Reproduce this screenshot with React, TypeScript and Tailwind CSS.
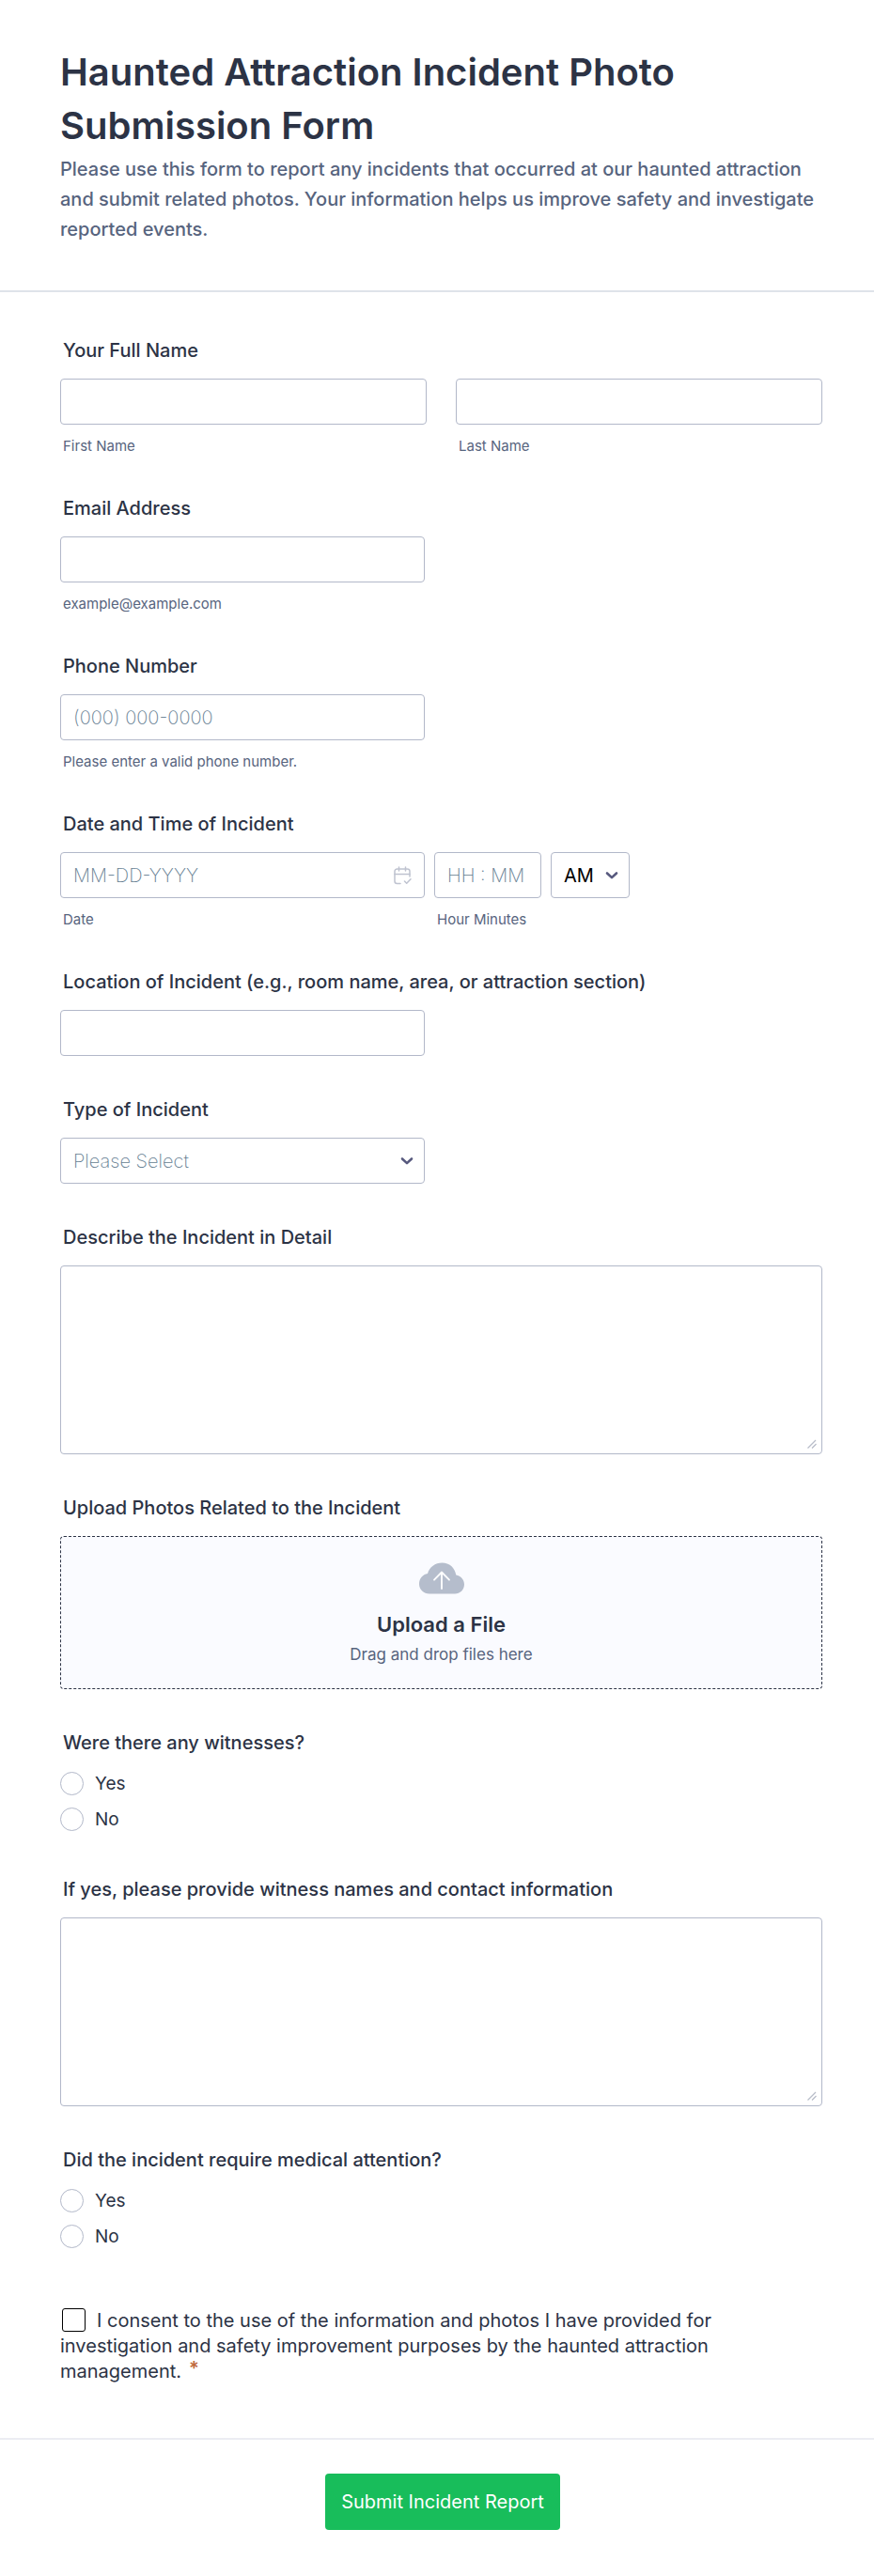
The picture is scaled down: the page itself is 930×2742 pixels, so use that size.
import { useState, type ReactNode } from 'react';

const inputBase =
  'h-[49px] rounded-sm border border-[#b2b8c9] bg-white px-[13px] text-xl font-extralight text-black placeholder:text-[#647d91] outline-none focus:border-blue-500';

const labelClass = 'mb-[18px] block px-[3px] text-xl leading-6 font-medium text-[#2c3345]';

interface FieldProps {
  id: string;
  label: string;
  children: ReactNode;
}

const Field = ({ id, label, children }: FieldProps) => (
  <div>
    <label htmlFor={id} className={labelClass}>
      {label}
    </label>
    {children}
  </div>
);

const SubLabel = ({ htmlFor, children }: { htmlFor: string; children: ReactNode }) => (
  <label htmlFor={htmlFor} className="mt-[14px] block px-[3px] text-[15px] leading-[18px] text-[#57647e]">
    {children}
  </label>
);

const TextArea = ({ id }: { id: string }) => (
  <div className="relative">
    <textarea
      id={id}
      className="block h-[201px] w-full resize-none rounded-sm border border-[#b2b8c9] bg-white p-3 text-xl font-light outline-none focus:border-blue-500"
    />
    <svg
      viewBox="0 0 10 10"
      className="pointer-events-none absolute right-[6px] bottom-[6px] h-[10px] w-[10px]"
      fill="none"
      stroke="#b8bdc9"
      strokeWidth="1.3"
    >
      <path d="M.5 9.500l8.500-8.500M5 9.500L9.500 5" />
    </svg>
  </div>
);

const ChevronIcon = ({ className }: { className: string }) => (
  <svg
    viewBox="0 0 14 9"
    className={`pointer-events-none absolute top-1/2 h-[9px] w-[14px] -translate-y-1/2 ${className}`}
    fill="none"
    stroke="#57597e"
    strokeWidth="2.6"
    strokeLinecap="round"
    strokeLinejoin="round"
  >
    <path d="M2 2l5 4.6L12 2" />
  </svg>
);

const CalendarIcon = () => (
  <svg
    viewBox="0 0 20 20"
    className="h-5 w-5"
    fill="none"
    stroke="#bfc3d0"
    strokeWidth="1.5"
    strokeLinecap="round"
    strokeLinejoin="round"
  >
    <path d="M8 18.500H4.500a2.500 2.500 0 0 1-2.500-2.500V5.500A2.500 2.500 0 0 1 4.500 3h11A2.500 2.500 0 0 1 18 5.500V11" />
    <path d="M2 8.500h16M6.500 1v4M13.500 1v4" />
    <path d="M12.500 16l2.200 2.200 4.300-4.400" />
  </svg>
);

const CloudIcon = () => (
  <svg viewBox="0 0 48 34" className="h-[34px] w-12">
    <path
      fill="#b5bdcc"
      d="M11 33.500C5 33.500 0 29.300 0 23c0-5.600 3.700-10 9-11C11 5 17 .500 24.500.500c7.700 0 13.500 5.200 14.800 13C44.500 14.500 48 18.500 48 23.500c0 5.800-4.500 10-10 10z"
    />
    <path
      d="M24 28V11M16 18.700l8-8.200 8 8.200"
      fill="none"
      stroke="#fff"
      strokeWidth="1.8"
      strokeLinecap="round"
      strokeLinejoin="round"
    />
  </svg>
);

const RadioGroup = ({ name, legend }: { name: string; legend: string }) => {
  const [value, setValue] = useState('');

  return (
    <fieldset>
      <legend className="px-[3px] text-xl leading-6 font-medium text-[#2c3345]">{legend}</legend>
      <div className="flex flex-col items-start gap-[13px] pt-[19px] pb-[5px]">
        {['Yes', 'No'].map(option => (
          <label key={option} className="flex items-center gap-3 text-[19px] leading-[25px] text-[#2c3345]">
            <input
              type="radio"
              name={name}
              value={option}
              checked={value === option}
              onChange={() => setValue(option)}
              className="h-[25px] w-[25px] appearance-none rounded-full border border-[#b2b8c9] bg-white checked:border-8 checked:border-blue-500"
            />
            {option}
          </label>
        ))}
      </div>
    </fieldset>
  );
};

export default function App() {
  return (
    <form className="bg-white font-['Inter',sans-serif]" onSubmit={e => e.preventDefault()}>
      {/* Header */}
      <header className="border-b-2 border-[#dfe3ea] pt-12 pr-[55px] pb-[49px] pl-16">
        <h1 className="text-[40px] leading-[57px] font-semibold text-[#2c3345]">
          Haunted Attraction Incident Photo Submission Form
        </h1>
        <p className="mt-[2px] text-xl leading-8 font-medium text-[#57647e]">
          Please use this form to report any incidents that occurred at our haunted attraction and submit
          related photos. Your information helps us improve safety and investigate reported events.
        </p>
      </header>

      {/* Fields */}
      <div className="flex flex-col gap-[45px] pt-[50px] pr-[55px] pb-[57px] pl-16">
        <Field id="first-name" label="Your Full Name">
          <div className="grid grid-cols-2 gap-[31px]">
            <div>
              <input id="first-name" type="text" className={`${inputBase} block w-full`} />
              <SubLabel htmlFor="first-name">First Name</SubLabel>
            </div>
            <div>
              <input id="last-name" type="text" className={`${inputBase} block w-full`} />
              <SubLabel htmlFor="last-name">Last Name</SubLabel>
            </div>
          </div>
        </Field>

        <Field id="email" label="Email Address">
          <input id="email" type="email" className={`${inputBase} block w-full max-w-[388px]`} />
          <SubLabel htmlFor="email">example@example.com</SubLabel>
        </Field>

        <Field id="phone" label="Phone Number">
          <input
            id="phone"
            type="tel"
            placeholder="(000) 000-0000"
            className={`${inputBase} block w-full max-w-[388px]`}
          />
          <SubLabel htmlFor="phone">Please enter a valid phone number.</SubLabel>
        </Field>

        <Field id="date" label="Date and Time of Incident">
          <div className="flex items-start gap-[10px]">
            <div className="w-[388px]">
              <div className="relative">
                <input id="date" type="text" placeholder="MM-DD-YYYY" className={`${inputBase} block w-full`} />
                <button
                  type="button"
                  aria-label="Choose date"
                  className="absolute top-1/2 right-[14px] -translate-y-1/2"
                >
                  <CalendarIcon />
                </button>
              </div>
              <SubLabel htmlFor="date">Date</SubLabel>
            </div>
            <div className="w-[114px]">
              <input id="time" type="text" placeholder="HH : MM" className={`${inputBase} block w-full`} />
              <SubLabel htmlFor="time">Hour Minutes</SubLabel>
            </div>
            <div className="relative">
              <select
                aria-label="AM or PM"
                className="h-[49px] w-[84px] appearance-none rounded-sm border border-[#b2b8c9] bg-white px-[13px] text-xl text-black outline-none"
              >
                <option>AM</option>
                <option>PM</option>
              </select>
              <ChevronIcon className="right-3" />
            </div>
          </div>
        </Field>

        <Field id="location" label="Location of Incident (e.g., room name, area, or attraction section)">
          <input id="location" type="text" className={`${inputBase} block w-full max-w-[388px]`} />
        </Field>

        <Field id="incident-type" label="Type of Incident">
          <div className="relative max-w-[388px]">
            <select
              id="incident-type"
              className="block h-[49px] w-full appearance-none rounded-sm border border-[#b2b8c9] bg-white px-[13px] text-xl font-extralight text-[#647d91] outline-none"
            >
              <option>Please Select</option>
            </select>
            <ChevronIcon className="right-3" />
          </div>
        </Field>

        <Field id="details" label="Describe the Incident in Detail">
          <TextArea id="details" />
        </Field>

        <Field id="photos" label="Upload Photos Related to the Incident">
          <label
            htmlFor="photos"
            className="flex h-[163px] cursor-pointer flex-col items-center rounded-sm border border-dashed border-[#2c3345] bg-[#fafbff] pt-[27px]"
          >
            <CloudIcon />
            <span className="mt-[18px] text-[22px] leading-7 font-semibold text-[#2c3345]">Upload a File</span>
            <span className="mt-1 text-[17px] leading-7 text-[#57647e]">Drag and drop files here</span>
            <input id="photos" type="file" multiple accept="image/*" className="sr-only" />
          </label>
        </Field>

        <RadioGroup name="witnesses" legend="Were there any witnesses?" />

        <Field id="witness-info" label="If yes, please provide witness names and contact information">
          <TextArea id="witness-info" />
        </Field>

        <RadioGroup name="medical" legend="Did the incident require medical attention?" />

        <div className="pt-[14px] pr-16 text-xl leading-[27px] text-[#2c3345]">
          <input
            id="consent"
            type="checkbox"
            required
            className="mr-3 ml-[2px] inline-block h-[25px] w-[25px] appearance-none rounded-[3px] border border-black bg-white align-top checked:bg-blue-500"
          />
          <label htmlFor="consent">
            I consent to the use of the information and photos I have provided for investigation and safety
            improvement purposes by the haunted attraction management.
          </label>
          <span className="ml-2 inline-block align-top leading-5 font-semibold text-[#c0693c]">*</span>
        </div>
      </div>

      {/* Submit */}
      <footer className="flex justify-center border-t-2 border-[#ecedf3] pt-[36px] pb-[50px] pl-3">
        <button type="submit" className="h-[60px] rounded-sm bg-[#18bd5b] px-[17px] text-xl text-white">
          Submit Incident Report
        </button>
      </footer>
    </form>
  );
}
